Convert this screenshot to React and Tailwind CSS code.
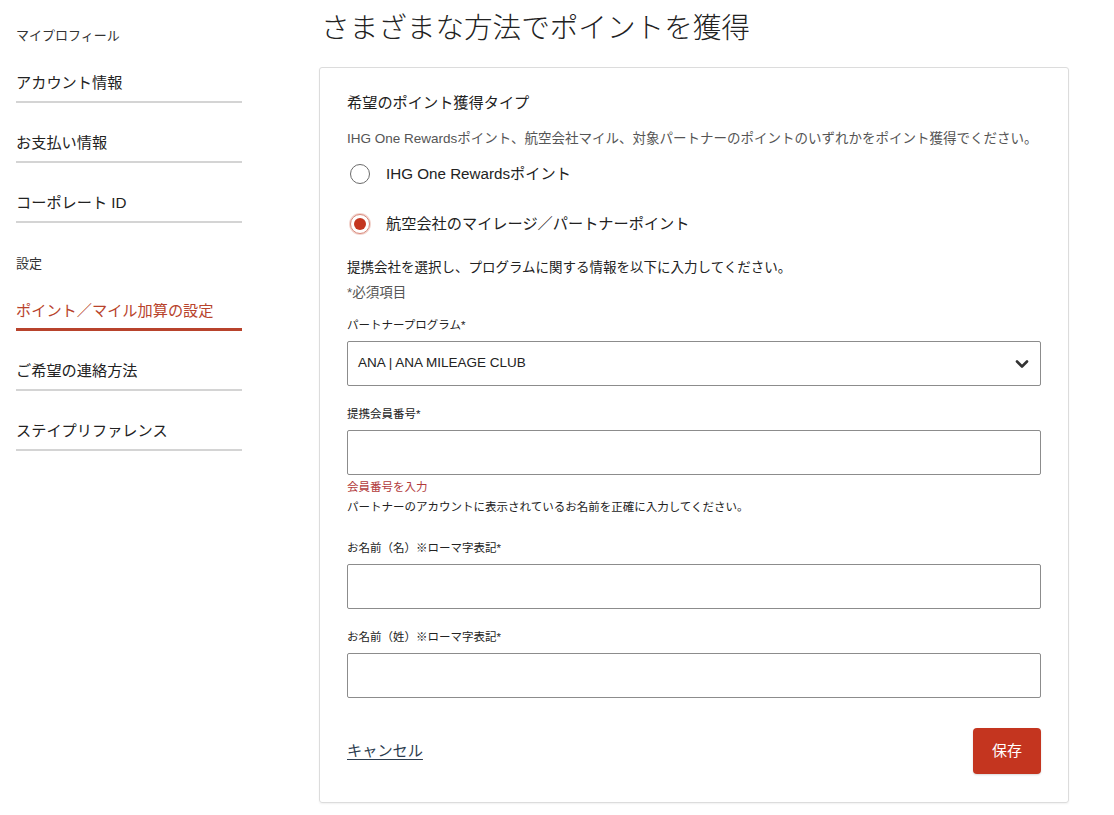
import React, { useState } from 'react';

const navTop = ['アカウント情報', 'お支払い情報', 'コーポレート ID'];
const navBottom = ['ポイント／マイル加算の設定', 'ご希望の連絡方法', 'ステイプリファレンス'];

function Radio({ checked, label, onClick }) {
  return (
    <button onClick={onClick} className="flex items-center h-[24px] text-left">
      <span className={'ml-[3px] w-[20px] h-[20px] rounded-full flex items-center justify-center bg-white ' + (checked ? 'border border-[#d88a7c] shadow-[0_0_0_1px_#f3d6d0]' : 'border border-[#6b6b6b]')}>
        {checked && <span className="w-[12px] h-[12px] rounded-full bg-[#c4351f]" />}
      </span>
      <span className="ml-[16px] text-[15.2px] leading-[20px] text-[#222]">{label}</span>
    </button>
  );
}

function Field({ label, mt = 'mt-[20px]' }) {
  return (
    <>
      <div className={mt + ' text-[11.5px] leading-[16px] text-[#222]'}>{label}</div>
      <input className="mt-[8px] h-[45px] w-full border border-[#8c8c8c] rounded-[2px] px-[10px] text-[13px] outline-none" />
    </>
  );
}

export default function App() {
  const [type, setType] = useState('partner');

  return (
    <div className="min-h-[815px] w-[1114px] bg-white text-[#222] flex" style={{ fontFamily: '"Liberation Sans", "Noto Sans CJK JP", sans-serif' }}>
      {/* sidebar */}
      <aside className="ml-[16px] w-[226px] shrink-0">
        <div className="pt-[29px] text-[13px] leading-[14px] text-[#333]">マイプロフィール</div>
        {navTop.map(item => (
          <div key={item} className="pt-[30px] pb-[8px] text-[15.2px] leading-[20px] border-b-2 border-[#d4d4d4]">
            {item}
          </div>
        ))}
        <div className="mt-[34px] text-[13px] leading-[14px] text-[#333]">設定</div>
        {navBottom.map((item, i) => (
          <div
            key={item}
            className={'pt-[30px] text-[15.2px] leading-[20px] ' + (i === 0 ? 'pb-[7px] text-[#b8432c] border-b-[3px] border-[#b8432c]' : 'pb-[8px] border-b-2 border-[#d4d4d4]')}
          >
            {item}
          </div>
        ))}
      </aside>

      {/* main */}
      <main className="ml-[77px] w-[750px] pt-[10px]">
        <h1 className="pl-[2px] text-[28.6px] leading-[36px] font-light text-[#222]">さまざまな方法でポイントを獲得</h1>

        <div className="mt-[21px] border border-[#dcdcdc] rounded-[3px] shadow-[0_1px_2px_rgba(0,0,0,0.06)] px-[27px] pt-[25px] pb-[28px] flex flex-col">
          <div className="text-[15.2px] leading-[20px]">希望のポイント獲得タイプ</div>
          <div className="mt-[17px] text-[13.5px] leading-[18px] text-[#555]">
            IHG One Rewardsポイント、航空会社マイル、対象パートナーのポイントのいずれかをポイント獲得でください。
          </div>

          <div className="mt-[14px]">
            <Radio checked={type === 'ihg'} label="IHG One Rewardsポイント" onClick={() => setType('ihg')} />
          </div>
          <div className="mt-[26px]">
            <Radio checked={type === 'partner'} label="航空会社のマイレージ／パートナーポイント" onClick={() => setType('partner')} />
          </div>

          <div className="mt-[23px] text-[13.5px] leading-[18px]">提携会社を選択し、プログラムに関する情報を以下に入力してください。</div>
          <div className="mt-[7px] text-[13.5px] leading-[18px] text-[#555]">*必須項目</div>

          <div className="mt-[15px] text-[11.5px] leading-[16px]">パートナープログラム*</div>
          <div className="mt-[8px] h-[45px] border border-[#8c8c8c] rounded-[2px] flex items-center justify-between pl-[10px] pr-[11px]">
            <span className="text-[13.5px]">ANA | ANA MILEAGE CLUB</span>
            <svg width="14" height="10" viewBox="0 0 14 10" fill="none">
              <path d="M2 2.5 L7 7.5 L12 2.5" stroke="#333" strokeWidth="2.6" strokeLinecap="round" strokeLinejoin="round" />
            </svg>
          </div>

          <Field label="提携会員番号*" />
          <div className="mt-[4px] text-[11.5px] leading-[16px] text-[#b23b3b]">会員番号を入力</div>
          <div className="mt-[4px] text-[11.5px] leading-[16px]">パートナーのアカウントに表示されているお名前を正確に入力してください。</div>

          <Field label="お名前（名）※ローマ字表記*" mt="mt-[25px]" />
          <Field label="お名前（姓）※ローマ字表記*" />

          <div className="mt-[30px] flex items-center justify-between">
            <a href="#" className="text-[15.2px] leading-[20px] text-[#2d3d4f] underline underline-offset-[3px]">キャンセル</a>
            <button className="w-[68px] h-[46px] rounded-[4px] bg-[#c4351f] text-white text-[15px] shadow-[0_1px_2px_rgba(0,0,0,0.15)]">保存</button>
          </div>
        </div>
      </main>
    </div>
  );
}
